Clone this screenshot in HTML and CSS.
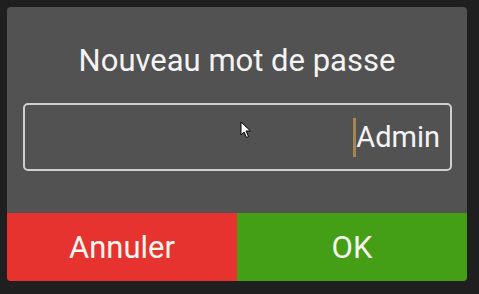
FILE: index.html
```html
<!DOCTYPE html>
<html lang="fr">
<head>
  <meta charset="UTF-8">
  <link rel="stylesheet" href="styles.css">
  <title>Nouveau mot de passe</title>
</head>
<body>
  <div class="dialog">
    <div class="title">Nouveau mot de passe</div>
    <div class="field">
      <span class="caret"></span>
      <span class="value">Admin</span>
      <!-- pointeur de la souris -->
      <svg class="pointer" width="12" height="18" viewBox="0 0 12 18">
        <path d="M1 1 L1 14 L4 11 L6.5 16.5 L8.5 15.5 L6 10 L10.5 10 Z" fill="#ffffff" stroke="#000000" stroke-width="1"/>
      </svg>
    </div>
    <div class="buttons">
      <div class="btn cancel">Annuler</div>
      <div class="btn ok">OK</div>
    </div>
  </div>
</body>
</html>
```
FILE: styles.css
```css
body {
  margin: 0;
  padding: 7px;
  background: #1f1f1f;
  font-family: Roboto, "Noto Sans", sans-serif;
}

.dialog {
  width: 460px;
  height: 274px;
  background: #535253;
  border-radius: 4px;
  overflow: hidden;
  display: flex;
  flex-direction: column;
}

.title {
  margin-top: 37px;
  height: 34px;
  line-height: 34px;
  text-align: center;
  color: #f4f4f4;
  font-size: 31px;
}

.field {
  position: relative;
  margin: 25px 15px 0 16px;
  height: 64px;
  border: 2px solid #cfcfcf;
  border-radius: 5px;
  display: flex;
  align-items: center;
  justify-content: flex-end;
  padding-right: 10px;
}

.caret {
  width: 3px;
  height: 39px;
  background: #a58650;
  margin-right: 0;
}

.value {
  color: #f4f4f4;
  font-size: 29px;
}

.pointer {
  position: absolute;
  left: 215px;
  top: 16px;
}

.buttons {
  margin-top: auto;
  height: 68px;
  display: flex;
}

.btn {
  flex: 1;
  display: flex;
  align-items: center;
  justify-content: center;
  color: #f6f6f0;
  font-size: 31px;
}

.cancel {
  background: #e6332f;
}

.ok {
  background: #449e16;
}
```
